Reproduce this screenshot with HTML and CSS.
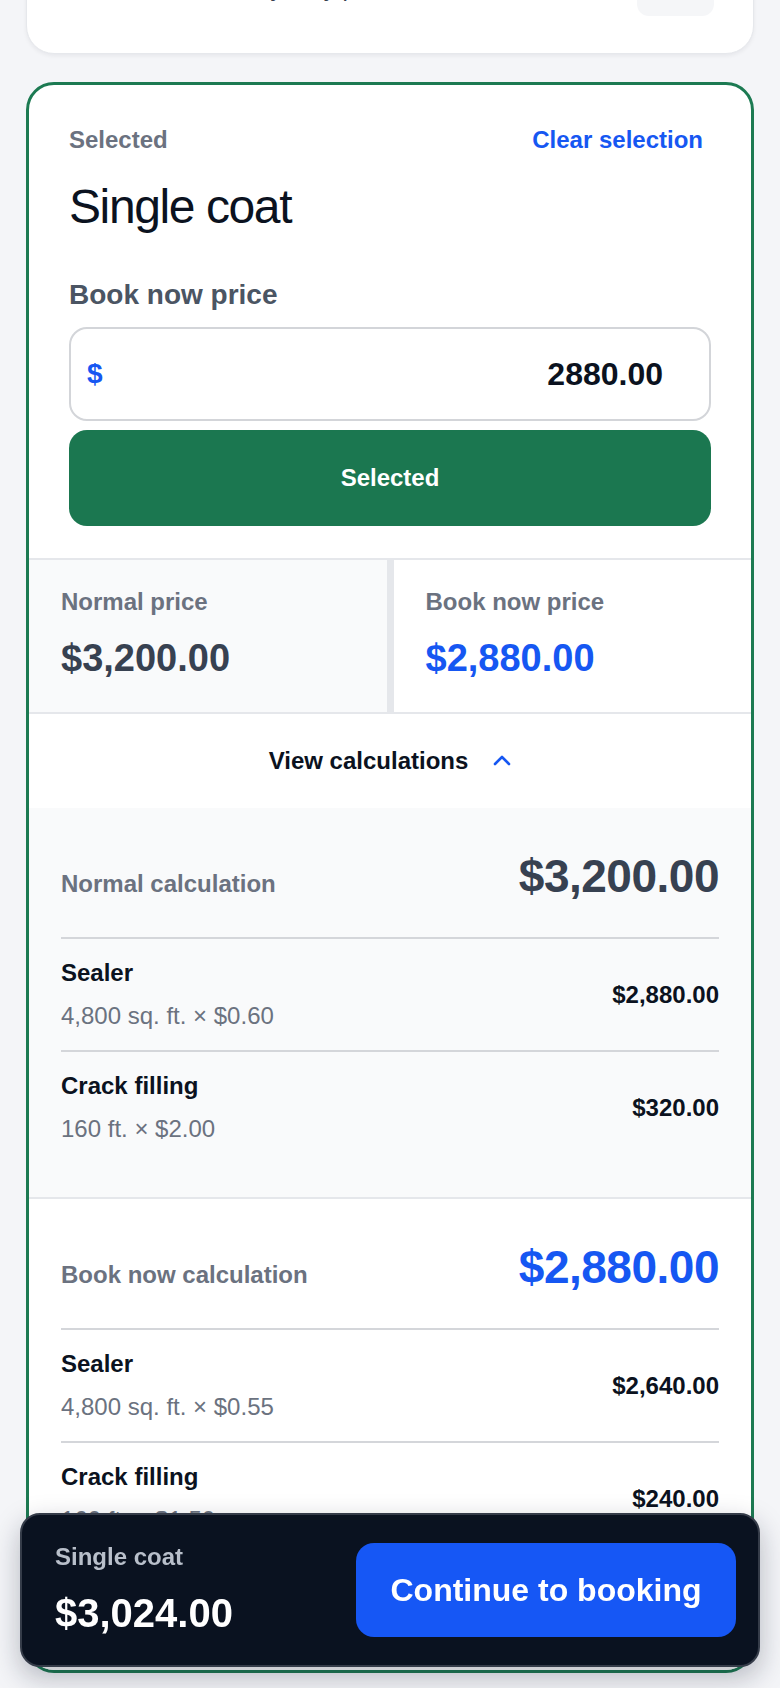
FILE: index.html
```html
<!DOCTYPE html>
<html lang="en">
<head>
<meta charset="utf-8">
<meta name="viewport" content="width=device-width, initial-scale=1">
<title>Single coat – Booking</title>
<link rel="stylesheet" href="styles.css">
</head>
<body>
<div class="page">
  <section class="card other-card">
    <div class="other-row">
      <span class="other-text">Two coats for heavy-duty protection</span>
      <span class="pill"></span>
    </div>
  </section>

  <section class="card selected-card">
    <div class="sel-top">
      <div class="sel-head">
        <span class="sel-label">Selected</span>
        <button class="clear-btn" type="button">Clear selection</button>
      </div>
      <h2 class="sel-title">Single coat</h2>
      <label class="field-label" for="bookNow">Book now price</label>
      <div class="price-field">
        <span class="cur">$</span>
        <input id="bookNow" class="price-input" type="text" value="2880.00">
      </div>
      <button class="selected-btn" type="button">Selected</button>
    </div>

    <div class="price-grid">
      <div class="price-cell normal">
        <div class="cell-label">Normal price</div>
        <div class="cell-amount">$3,200.00</div>
      </div>
      <div class="price-cell book">
        <div class="cell-label">Book now price</div>
        <div class="cell-amount blue">$2,880.00</div>
      </div>
    </div>

    <button class="view-calc" type="button">
      <span>View calculations</span>
      <svg class="chev" width="18" height="12" viewBox="0 0 18 12" aria-hidden="true"><polyline points="2,10 9,3 16,10" fill="none" stroke="#1657f2" stroke-width="2.6" stroke-linecap="round" stroke-linejoin="round"/></svg>
    </button>

    <div class="calc calc-normal">
      <div class="calc-head">
        <span class="calc-label">Normal calculation</span>
        <span class="calc-total">$3,200.00</span>
      </div>
      <div class="calc-item">
        <div class="item-info">
          <div class="item-name">Sealer</div>
          <div class="item-sub">4,800 sq. ft. × $0.60</div>
        </div>
        <div class="item-amount">$2,880.00</div>
      </div>
      <div class="calc-item">
        <div class="item-info">
          <div class="item-name">Crack filling</div>
          <div class="item-sub">160 ft. × $2.00</div>
        </div>
        <div class="item-amount">$320.00</div>
      </div>
    </div>

    <div class="calc calc-book">
      <div class="calc-head">
        <span class="calc-label">Book now calculation</span>
        <span class="calc-total blue">$2,880.00</span>
      </div>
      <div class="calc-item">
        <div class="item-info">
          <div class="item-name">Sealer</div>
          <div class="item-sub">4,800 sq. ft. × $0.55</div>
        </div>
        <div class="item-amount">$2,640.00</div>
      </div>
      <div class="calc-item">
        <div class="item-info">
          <div class="item-name">Crack filling</div>
          <div class="item-sub">160 ft. × $1.50</div>
        </div>
        <div class="item-amount">$240.00</div>
      </div>
    </div>
  </section>
</div>

<div class="bottom-bar">
  <div class="bar-info">
    <div class="bar-label">Single coat</div>
    <div class="bar-total">$3,024.00</div>
  </div>
  <button class="continue-btn" type="button">Continue to booking</button>
</div>
</body>
</html>
```

FILE: styles.css
```css
* { box-sizing: border-box; }

html, body {
  margin: 0;
  padding: 0;
  background: #f4f5f8;
  font-family: "Liberation Sans", Arial, Helvetica, sans-serif;
  color: #0b1220;
}

button, input {
  font-family: inherit;
}

.page {
  padding: 0 26px;
  margin-top: -61px;
}

.card {
  background: #ffffff;
  border-radius: 28px;
}

/* previous (cut-off) card */
.other-card {
  border: 1px solid #e6e8ec;
  box-shadow: 0 2px 4px rgba(15, 23, 42, 0.06);
  padding: 32px 39px 37px 42px;
}

.other-row {
  display: flex;
  justify-content: space-between;
  align-items: flex-end;
  height: 44px;
}

.other-text {
  font-size: 24px;
  line-height: 30px;
  color: #374151;
  margin-bottom: 13px;
}

.pill {
  width: 77px;
  height: 44px;
  border-radius: 12px;
  background: #f5f6f8;
}

/* selected card */
.selected-card {
  margin-top: 28px;
  border: 3px solid #1c7a52;
  overflow: hidden;
}

.sel-top {
  padding: 40px 40px 32px;
}

.sel-head {
  display: flex;
  justify-content: space-between;
  align-items: center;
  height: 30px;
}

.sel-label {
  font-size: 24px;
  font-weight: 700;
  line-height: 30px;
  color: #6b7280;
}

.clear-btn {
  background: none;
  border: none;
  padding: 0 8px;
  font-size: 24px;
  font-weight: 700;
  line-height: 30px;
  color: #1657f2;
  cursor: pointer;
}

.sel-title {
  margin: 24px 0 0;
  font-size: 48px;
  font-weight: 400;
  line-height: 56px;
  letter-spacing: -1.4px;
  color: #0b1220;
}

.field-label {
  display: block;
  margin-top: 42px;
  font-size: 28px;
  font-weight: 700;
  line-height: 36px;
  color: #4b5563;
}

.price-field {
  margin-top: 14px;
  height: 94px;
  border: 2px solid #d3d5d9;
  border-radius: 18px;
  display: flex;
  align-items: center;
  padding: 0 46px 0 16px;
  background: #fff;
}

.cur {
  font-size: 28px;
  font-weight: 700;
  color: #1657f2;
}

.price-input {
  flex: 1;
  min-width: 0;
  border: none;
  outline: none;
  background: transparent;
  padding: 0;
  text-align: right;
  font-size: 32px;
  font-weight: 700;
  color: #0b1220;
}

.selected-btn {
  display: block;
  width: 100%;
  margin-top: 9px;
  height: 96px;
  border: none;
  border-radius: 18px;
  background: #1b7750;
  color: #ffffff;
  font-size: 24px;
  font-weight: 700;
  cursor: pointer;
}

/* price comparison */
.price-grid {
  display: grid;
  grid-template-columns: 1fr 1fr;
  column-gap: 7px;
  background: #e5e7eb;
  border-top: 2px solid #e5e7eb;
  border-bottom: 2px solid #e5e7eb;
}

.price-cell {
  padding: 28px 32px 32px;
}

.price-cell.normal { background: #f9fafb; }
.price-cell.book { background: #ffffff; }

.cell-label {
  font-size: 24px;
  font-weight: 700;
  line-height: 28px;
  color: #6b7280;
}

.cell-amount {
  margin-top: 20px;
  font-size: 38px;
  font-weight: 700;
  line-height: 44px;
  color: #374151;
}

.blue { color: #1657f2 !important; }

.view-calc {
  display: flex;
  width: 100%;
  height: 94px;
  align-items: center;
  justify-content: center;
  gap: 25px;
  background: #ffffff;
  border: none;
  padding: 0;
  font-size: 24px;
  font-weight: 700;
  color: #0b1220;
  cursor: pointer;
}

.chev { display: block; margin-top: -2px; }

/* calculations */
.calc {
  padding: 40px 32px 34px;
}

.calc-normal {
  background: #f9fafb;
  border-bottom: 2px solid #e5e7eb;
}

.calc-book {
  background: #ffffff;
  padding-bottom: 116px;
}

.calc-head {
  display: flex;
  justify-content: space-between;
  align-items: baseline;
  margin-bottom: 33px;
}

.calc-label {
  font-size: 24px;
  font-weight: 700;
  color: #6b7280;
}

.calc-total {
  font-size: 46px;
  font-weight: 700;
  line-height: 56px;
  letter-spacing: -0.5px;
  color: #374151;
}

.calc-item {
  display: flex;
  justify-content: space-between;
  align-items: center;
  border-top: 2px solid #d4d6da;
  padding: 18px 0;
}

.item-name {
  font-size: 24px;
  font-weight: 700;
  line-height: 32px;
  color: #0b1220;
}

.item-sub {
  margin-top: 11px;
  font-size: 24px;
  line-height: 32px;
  color: #6b7280;
}

.item-amount {
  font-size: 24px;
  font-weight: 700;
  color: #0b1220;
}

/* sticky bottom bar */
.bottom-bar {
  position: fixed;
  left: 20px;
  right: 20px;
  bottom: 21px;
  height: 154px;
  background: #0a1220;
  border: 2px solid #353c49;
  border-radius: 20px;
  box-shadow: 0 10px 28px rgba(15, 23, 42, 0.28);
  display: flex;
  align-items: center;
  justify-content: space-between;
  padding: 0 22px 0 33px;
}

.bar-info {
  display: flex;
  flex-direction: column;
  gap: 18px;
}

.bar-label {
  font-size: 24px;
  font-weight: 700;
  line-height: 28px;
  color: #b8bfca;
}

.bar-total {
  font-size: 40px;
  font-weight: 700;
  line-height: 48px;
  color: #ffffff;
}

.continue-btn {
  width: 380px;
  height: 94px;
  border: none;
  border-radius: 18px;
  background: #1657f5;
  color: #ffffff;
  font-size: 32px;
  font-weight: 700;
  cursor: pointer;
}
```
